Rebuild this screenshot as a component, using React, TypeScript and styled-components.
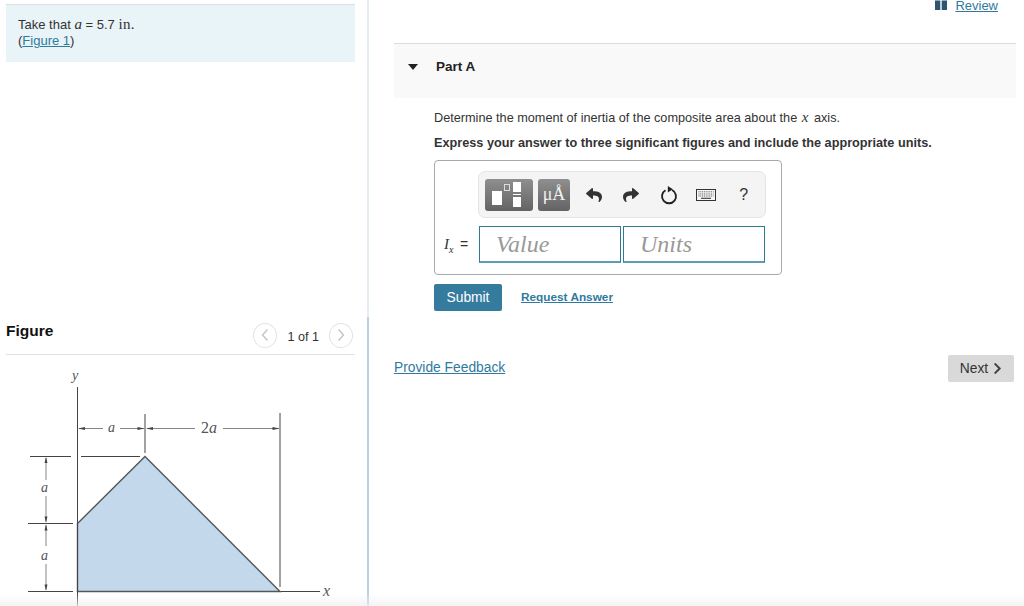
import React from 'react';
import styled, { createGlobalStyle } from 'styled-components';
import { FaReply, FaShare, FaChevronRight } from 'react-icons/fa';

const GlobalStyle = createGlobalStyle`
  html, body {
    margin: 0;
    padding: 0;
    background: #fff;
  }
  body {
    font-family: 'Liberation Sans', Arial, sans-serif;
    font-size: 13px;
    color: #333;
  }
`;

const Page = styled.div`
  position: relative;
  display: flex;
  width: 1024px;
  height: 606px;
  overflow: hidden;
`;

const BottomFade = styled.div`
  position: absolute;
  left: 0;
  right: 0;
  bottom: 0;
  height: 12px;
  background: linear-gradient(to bottom, rgba(240, 240, 240, 0), rgba(240, 240, 240, 0.75));
  pointer-events: none;
`;

const LeftPane = styled.div`
  box-sizing: border-box;
  flex: 0 0 369px;
  height: 606px;
  padding: 4px 14px 0 6px;
  background: linear-gradient(to bottom, #e4edf3 0, #e4edf3 317px, #bcd0e0 317px) right top / 2px 100% no-repeat;
`;

const Callout = styled.div`
  box-sizing: border-box;
  height: 58px;
  padding: 11px 12px 0;
  background: #e8f4f7;
  border-top: 1px solid #dcdfe0;
  font-size: 13px;
  line-height: 16px;
`;

const MathVar = styled.i`
  font-family: 'Liberation Serif', serif;
  font-size: 15px;
`;

const MathUnit = styled.span`
  font-family: 'Liberation Serif', serif;
  font-size: 15px;
  letter-spacing: 0.4px;
`;

const TextLink = styled.a`
  color: #2f7a9e;
  text-decoration: underline;
`;

const FigureHeader = styled.div`
  display: flex;
  align-items: center;
  justify-content: space-between;
  box-sizing: border-box;
  height: 38px;
  margin-top: 255px;
  border-bottom: 1px solid #dfe2e4;
`;

const FigureTitle = styled.h3`
  margin: 0 0 9px;
  font-size: 15.5px;
  line-height: 18px;
  font-weight: bold;
  color: #111;
`;

const Pager = styled.div`
  display: flex;
  align-items: center;
  gap: 10px;
  margin: 0 2px 1px 0;
  font-size: 12.6px;
  color: #333;
`;

const PagerCount = styled.span`
  padding-top: 4px;
`;

const PagerButton = styled.span`
  box-sizing: border-box;
  display: flex;
  align-items: center;
  justify-content: center;
  width: 24px;
  height: 25px;
  border: 1px solid #e2e2e2;
  border-radius: 50%;
`;

const FigureImage = styled.svg`
  display: block;
  width: 349px;
  height: 251px;
`;

const RightPane = styled.div`
  flex: 1;
  min-width: 0;
  padding: 0 8px 0 25px;
`;

const ReviewRow = styled.div`
  display: flex;
  justify-content: flex-end;
  align-items: flex-start;
  height: 43px;
  padding: 0 18px 0 0;
`;

const ReviewLink = styled.a`
  display: flex;
  align-items: flex-start;
  gap: 8px;
  color: #2f7a9e;
  font-size: 13px;
  line-height: 12px;
  text-decoration: none;
`;

const ReviewText = styled.span`
  text-decoration: underline;
`;

const PartHeader = styled.div`
  box-sizing: border-box;
  display: flex;
  align-items: flex-start;
  height: 55px;
  padding: 15px 0 0 14px;
  background: #f9f9f9;
  border-top: 1px solid #dcdcdc;
`;

const Caret = styled.span`
  width: 0;
  height: 0;
  margin: 5px 18px 0 0;
  border-left: 5.5px solid transparent;
  border-right: 5.5px solid transparent;
  border-top: 6px solid #222;
`;

const PartTitle = styled.span`
  font-size: 13.5px;
  line-height: 16px;
  font-weight: bold;
  color: #222;
`;

const PartBody = styled.div`
  padding: 11px 0 0 40px;
`;

const Prompt = styled.p`
  margin: 0 0 9px;
  font-size: 12.7px;
  line-height: 16px;
`;

const PromptVar = styled(MathVar)`
  margin: 0 2px 0 1px;
`;

const Instruction = styled.p`
  margin: 0 0 9px;
  font-size: 12.7px;
  line-height: 16px;
  font-weight: bold;
`;

const AnswerBox = styled.div`
  box-sizing: border-box;
  width: 348px;
  height: 115px;
  padding: 10px 16px 0 43px;
  border: 1px solid #aaa;
  border-radius: 4px;
`;

const Toolbar = styled.div`
  box-sizing: border-box;
  display: flex;
  align-items: center;
  width: 288px;
  height: 47px;
  padding: 0 6px;
  background: #f4f4f4;
  border: 1px solid #e4e4e4;
  border-radius: 7px;
`;

const TemplateButton = styled.span<{ $wide?: boolean }>`
  flex: none;
  display: flex;
  align-items: center;
  justify-content: center;
  width: ${p => (p.$wide ? 48 : 32)}px;
  height: 32px;
  margin-right: 5px;
  border-radius: 3px;
  background: linear-gradient(to bottom, #8f8f8f, #636363);
  color: #f2f2f2;
  font-family: 'Liberation Serif', serif;
  font-size: 18px;
`;

const ToolIcon = styled.span`
  flex: none;
  display: flex;
  align-items: center;
  justify-content: center;
  width: 37.5px;
  height: 32px;
  color: #333;
  font-size: 16px;
`;

const InputRow = styled.div`
  display: flex;
  align-items: center;
  gap: 2px;
  margin: 8px 0 0 -34px;
`;

const InputLabel = styled.span`
  flex: none;
  width: 33px;
  font-size: 13px;
  white-space: nowrap;
`;

const Subscript = styled.sub`
  margin-right: 3px;
  font-family: 'Liberation Serif', serif;
  font-size: 10px;
  line-height: 0;
`;

const LabelEquals = styled.span`
  font-size: 14px;
`;

const ValueInput = styled.div`
  flex: none;
  box-sizing: border-box;
  width: 142px;
  height: 37px;
  padding: 2px 0 0 16px;
  border: 1px solid #2f7a95;
  border-bottom: 2px solid #5d9db5;
  font-family: 'Liberation Serif', serif;
  font-style: italic;
  font-size: 24px;
  line-height: 31px;
  color: #999;
`;

const ActionRow = styled.div`
  display: flex;
  align-items: flex-start;
  gap: 19px;
  margin-top: 9px;
`;

const SubmitButton = styled.button`
  width: 68px;
  height: 27px;
  padding: 0;
  border: 0;
  border-radius: 2px;
  background: #357b9e;
  color: #fff;
  font-family: inherit;
  font-size: 13.8px;
`;

const RequestLink = styled.a`
  margin-top: 6px;
  color: #2f7a9e;
  font-size: 11.8px;
  line-height: 15px;
  font-weight: bold;
  text-decoration: underline;
`;

const FooterRow = styled.div`
  display: flex;
  align-items: flex-start;
  justify-content: space-between;
  margin: 44px 2px 0 0;
`;

const FeedbackLink = styled.a`
  margin-top: 4px;
  color: #2f7a9e;
  font-size: 13.8px;
  line-height: 17px;
  text-decoration: underline;
`;

const NextButton = styled.span`
  box-sizing: border-box;
  display: flex;
  align-items: center;
  justify-content: center;
  gap: 3px;
  width: 66px;
  height: 27px;
  padding-left: 2px;
  border-radius: 2px;
  background: #d9d9d9;
  color: #333;
  font-size: 13.8px;
`;

const Chevron = ({ left }: { left?: boolean }) => (
  <svg width="10" height="14" viewBox="0 0 10 14">
    <path d={left ? 'M7.5 1.5 2.5 7l5 5.5' : 'M2.5 1.5 7.5 7l-5 5.5'} fill="none" stroke="#c4c4c4" strokeWidth="1.4" />
  </svg>
);

const BookIcon = () => (
  <svg width="12" height="10" viewBox="0 0 12 10">
    <path d="M0 .5h5.3V10H0zM6.7.5H12V10H6.7z" fill="#2c5573" />
  </svg>
);

const TemplateGlyph = () => (
  <svg width="48" height="32" viewBox="0 0 48 32">
    <rect x="7" y="12" width="10" height="14" fill="#fff" />
    <rect x="19.5" y="5.5" width="5" height="6" fill="none" stroke="#ddd" strokeWidth="1" />
    <rect x="28" y="3" width="8" height="10" fill="#fff" />
    <rect x="28" y="15" width="8" height="1" fill="#fff" />
    <rect x="28" y="18" width="8" height="10" fill="#fff" />
  </svg>
);

const ResetIcon = () => (
  <svg width="18" height="20" viewBox="0 0 18 20">
    <path d="M5.5 5.2a7 7 0 1 0 6.6-.2" fill="none" stroke="#222" strokeWidth="1.9" />
    <path d="M7.8 1v6.6L12.9 4.3z" fill="#222" />
  </svg>
);

const KeyboardIcon = () => (
  <svg width="20" height="12" viewBox="0 0 20 12">
    <rect x=".5" y=".5" width="19" height="11" fill="#f8f8f8" stroke="#333" />
    <path d="M2.5 2.8h15M2.5 5h15M2.5 7h15" stroke="#555" strokeWidth="1" strokeDasharray="1 .8" />
    <path d="M5 9.3h10" stroke="#444" strokeWidth="1.2" />
  </svg>
);

const DiagramLabel = styled.text`
  font-family: 'Liberation Serif', serif;
  font-style: italic;
  font-size: 14px;
  fill: #555;
`;

// drawn in page coordinates, the viewBox just shifts them to the pane
const Diagram = () => (
  <FigureImage viewBox="6 355 349 251">
    <polygon points="77.5,523.5 145,456.5 280,591.5 77.5,591.5" fill="#c3d8eb" />
    <path d="M77.5 523.5 145 456.5 280 591.5H77.5z" fill="none" stroke="#555" strokeWidth="1.4" />
    <g stroke="#444" strokeWidth="1" fill="none">
      <path d="M77.5 387V606" />
      <path d="M145 414V453M280 413V587" />
      <path d="M30 456.5H71M81 456.5H140" />
      <path d="M28 523.5H73M28 591.5H73" />
      <path d="M280.5 591.5H320" />
    </g>
    <g stroke="#666" strokeWidth="0.8" fill="none">
      <path d="M79 428.5H103M120 428.5H144M147 428.5H195M223 428.5H279" />
      <path d="M46 458V480M46 496V522M46 525V546M46 564V590" />
    </g>
    <g fill="#444">
      <path d="M78 428.5l7-1.5v3zM144.5 428.5l-7-1.5v3zM146 428.5l7-1.5v3zM279.5 428.5l-7-1.5v3z" />
      <path d="M46 457l-1.5 6h3zM46 522.5l-1.5-6h3zM46 524.5l-1.5 6h3zM46 590.5l-1.5-6h3z" />
    </g>
    <DiagramLabel x="72" y="380">y</DiagramLabel>
    <DiagramLabel x="108" y="432">a</DiagramLabel>
    <DiagramLabel x="201" y="433" style={{ fontSize: 16 }}>
      <tspan fontStyle="normal">2</tspan>a
    </DiagramLabel>
    <DiagramLabel x="41" y="492">a</DiagramLabel>
    <DiagramLabel x="41" y="560">a</DiagramLabel>
    <DiagramLabel x="323" y="596" style={{ fontSize: 16 }}>x</DiagramLabel>
  </FigureImage>
);

export default function App() {
  return (
    <Page>
      <GlobalStyle />
      <LeftPane>
        <Callout>
          Take that <MathVar>a</MathVar> = 5.7 <MathUnit>in.</MathUnit>
          <br />
          (<TextLink href="#figure">Figure 1</TextLink>)
        </Callout>
        <FigureHeader>
          <FigureTitle>Figure</FigureTitle>
          <Pager>
            <PagerButton>
              <Chevron left />
            </PagerButton>
            <PagerCount>1 of 1</PagerCount>
            <PagerButton>
              <Chevron />
            </PagerButton>
          </Pager>
        </FigureHeader>
        <Diagram />
      </LeftPane>
      <RightPane>
        <ReviewRow>
          <ReviewLink href="#review">
            <BookIcon />
            <ReviewText>Review</ReviewText>
          </ReviewLink>
        </ReviewRow>
        <PartHeader>
          <Caret />
          <PartTitle>Part A</PartTitle>
        </PartHeader>
        <PartBody>
          <Prompt>
            Determine the moment of inertia of the composite area about the <PromptVar>x</PromptVar> axis.
          </Prompt>
          <Instruction>Express your answer to three significant figures and include the appropriate units.</Instruction>
          <AnswerBox>
            <Toolbar>
              <TemplateButton $wide>
                <TemplateGlyph />
              </TemplateButton>
              <TemplateButton>μÅ</TemplateButton>
              <ToolIcon>
                <FaReply />
              </ToolIcon>
              <ToolIcon>
                <FaShare />
              </ToolIcon>
              <ToolIcon>
                <ResetIcon />
              </ToolIcon>
              <ToolIcon>
                <KeyboardIcon />
              </ToolIcon>
              <ToolIcon>?</ToolIcon>
            </Toolbar>
            <InputRow>
              <InputLabel>
                <MathVar>I</MathVar>
                <Subscript>
                  <i>x</i>
                </Subscript>{' '}
                <LabelEquals>=</LabelEquals>
              </InputLabel>
              <ValueInput>Value</ValueInput>
              <ValueInput>Units</ValueInput>
            </InputRow>
          </AnswerBox>
          <ActionRow>
            <SubmitButton>Submit</SubmitButton>
            <RequestLink href="#answer">Request Answer</RequestLink>
          </ActionRow>
        </PartBody>
        <FooterRow>
          <FeedbackLink href="#feedback">Provide Feedback</FeedbackLink>
          <NextButton>
            Next <FaChevronRight size={13} color="#444" />
          </NextButton>
        </FooterRow>
      </RightPane>
      <BottomFade />
    </Page>
  );
}
